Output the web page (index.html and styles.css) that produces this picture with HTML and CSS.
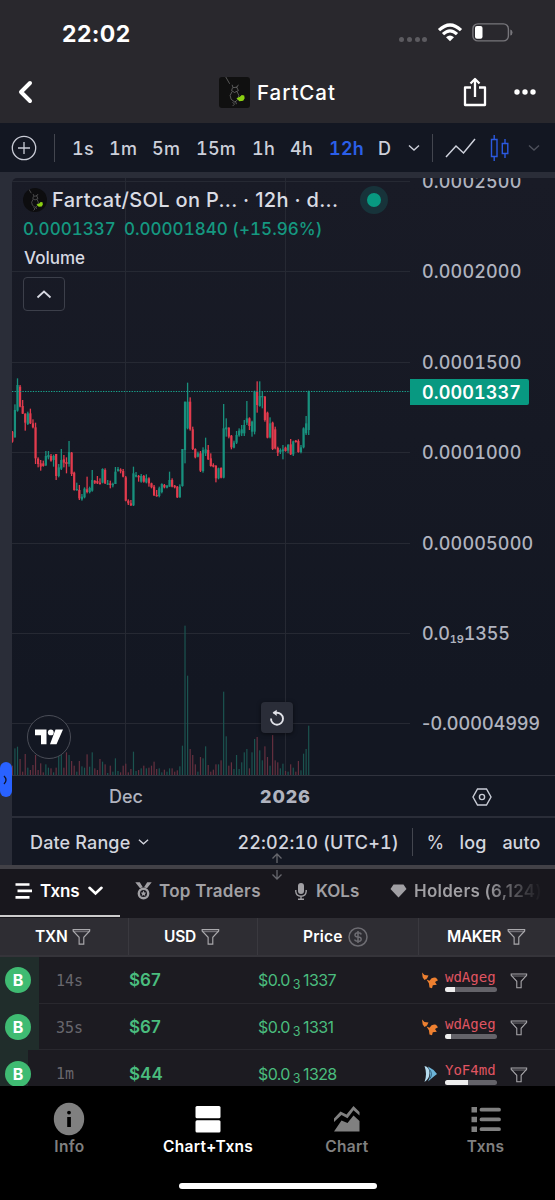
FILE: index.html
```html
<!DOCTYPE html>
<html lang="en">
<head>
<meta charset="utf-8">
<title>FartCat</title>
<link rel="stylesheet" href="styles.css">
</head>
<body>
<svg width="0" height="0" class="defs">
  <symbol id="funnel" viewBox="0 0 20 18"><path d="M1.2 1.2h17.4v1.5L12.4 9.300v7.200H7.500V9.300L1.200 2.700z" fill="none" stroke="currentColor" stroke-width="1.200"/><path d="M1.500 3.400h17" stroke="currentColor" stroke-width=".7"/></symbol>
  <symbol id="chev" viewBox="0 0 12 8"><path d="M1 1.500l5 4.500 5-4.500" fill="none" stroke="currentColor" stroke-width="1.400"/></symbol>
  <symbol id="cat" viewBox="0 0 32 32"><path d="M7 0l4 7M13.500 8l1 3 4-.5 1.500-2.500M14 11l-1 3 3 2 4-2-2-4M13.500 15l-2 4 1 4 4 3 3-3 1-4-2-4M14 26l2 2-2 2M17 25l1 3" fill="none" stroke="#7c7c7c" stroke-width=".7"/><path d="M18 22l3.500-1.500 2-2 2.500.5.500 3-1.500 2.500-4 .5z" fill="#8bd012"/></symbol>
  <symbol id="fox" viewBox="0 0 18 18"><path d="M1 1.500l2.500 2.500 4 .5-1.500 3-2.500 1.500-1.800-2.500z"/><path d="M5.500 8.500l3 1.200Q11 5.500 15 6.800l2 2.400-3 1.800 1.800 2.800-4 .4-.8 3-2.500-.6-.6-4.400z"/></symbol>
</svg>

<header class="header">
  <div class="status">
    <span class="clock">22:02</span>
    <span class="dots"><i></i><i></i><i></i><i></i></span>
    <svg class="wifi" width="26" height="19" viewBox="0 0 26 19"><g fill="none" stroke="#fff" stroke-width="3.200"><path d="M2 7.200Q13-3.200 24 7.200"/><path d="M6 11.200Q13 4.600 20 11.200"/></g><path d="M9 14.200Q13 10.600 17 14.200L13 18.300z" fill="#fff"/></svg>
    <svg width="41" height="19" viewBox="0 0 41 19"><rect x=".9" y=".9" width="35.500" height="17" rx="5" fill="none" stroke="#77767b" stroke-width="1.400"/><rect x="3" y="3" width="7.500" height="12.800" rx="2" fill="#fff"/><path d="M38.300 6.500q2.200.5 2.200 3t-2.200 3z" fill="#77767b"/></svg>
  </div>
  <div class="titlebar">
    <svg class="back" width="16" height="24" viewBox="0 0 16 24"><path d="M13 3L4 12l9 9" fill="none" stroke="#fff" stroke-width="4" stroke-linecap="round" stroke-linejoin="round"/></svg>
    <svg class="avatar" width="31" height="31"><use href="#cat"/></svg>
    <h1>FartCat</h1>
    <svg class="share" width="24" height="30" viewBox="0 0 24 30"><path d="M8 10.500H2V28h20V10.500h-6M12 20V3M7.500 6.500L12 2l4.500 4.500" fill="none" stroke="#fff" stroke-width="2.300" stroke-linejoin="round"/></svg>
    <svg class="more" width="22" height="6" viewBox="0 0 22 6"><g fill="#fff"><circle cx="3" cy="3" r="2.700"/><circle cx="11" cy="3" r="2.700"/><circle cx="19" cy="3" r="2.700"/></g></svg>
  </div>
</header>

<nav class="intervals">
  <svg class="plus" width="26" height="26" viewBox="0 0 26 26"><g fill="none" stroke="#c9ccd6" stroke-width="1.300"><circle cx="13" cy="13" r="11.700"/><path d="M13 7v12M7 13h12"/></g></svg>
  <i class="sep"></i>
  <span class="i1">1s</span><span class="i2">1m</span><span class="i3">5m</span><span class="i4">15m</span><span class="i5">1h</span><span class="i6">4h</span><span class="i7 on">12h</span><span class="i8">D</span>
  <svg class="ivchev" width="12" height="8"><use href="#chev"/></svg>
  <i class="sep sep2"></i>
  <svg class="line" width="31" height="22" viewBox="0 0 31 22"><path d="M1 20L11 9l7.500 7L30 2" fill="none" stroke="#cfd2dc" stroke-width="1.500"/></svg>
  <svg class="candles" width="20" height="28" viewBox="0 0 20 28"><path d="M1.500 5.500h5.500v17H1.500zM4.200 1v4.500M4.200 22.500V27M12.300 9.500h5.500v10h-5.500zM15 5v4.500M15 19.500V24" fill="none" stroke="#2b59e0" stroke-width="1.400"/></svg>
  <svg class="dim" width="12" height="8"><use href="#chev"/></svg>
</nav>

<main class="frame">
  <section class="panel">
    <div class="plot">
      <svg class="canvas" id="canvas" width="398" height="598"></svg>
      <div class="axis">
        <span>0.0002500</span><span>0.0002000</span><span>0.0001500</span><span>0.0001000</span><span>0.00005000</span><span class="tiny">0.0<sub>19</sub>1355</span><span class="neg">-0.00004999</span>
      </div>
      <b class="last">0.0001337</b>
      <div class="legend">
        <div class="pair"><svg width="24" height="24" viewBox="0 0 32 32"><use href="#cat"/></svg><span>Fartcat/SOL on P... · 12h · d...</span><i></i></div>
        <div class="vals"><span>0.0001337</span><span>0.00001840 (+15.96%)</span></div>
        <div class="vol">Volume</div>
        <div class="fold"><svg width="16" height="10" viewBox="0 0 16 10"><path d="M1.500 8.500L8 2.500l6.500 6" fill="none" stroke="#d7d9e2" stroke-width="1.800"/></svg></div>
      </div>
      <div class="tv"><svg width="29" height="16" viewBox="0 0 29 16"><path d="M0 .5h11.500v14.700H6V6.300H0zM20.500.5H28l-6.500 14.700H15z" fill="#fff"/><circle cx="15.800" cy="3.400" r="2.900" fill="#fff"/></svg></div>
      <div class="reset"><svg width="18" height="18" viewBox="0 0 18 18"><path d="M3 9.500a6 6 0 1 0 5.500-5.700H5.500" fill="none" stroke="#e2e3e9" stroke-width="1.900"/><path d="M8.700.7v6.200L4.600 3.800z" fill="#e2e3e9"/></svg></div>
    </div>
    <div class="timeaxis"><span class="dec">Dec</span><b>2026</b><svg width="20" height="18" viewBox="0 0 20 18"><path d="M5.500 1h9L19 9l-4.500 8h-9L1 9z" fill="none" stroke="#c9ccd6" stroke-width="1.400"/><circle cx="10" cy="9" r="2.600" fill="none" stroke="#c9ccd6" stroke-width="1.400"/></svg></div>
    <div class="range"><span class="dr">Date Range</span><svg width="11" height="8" viewBox="0 0 12 8"><use href="#chev"/></svg><span class="utc">22:02:10 (UTC+1)</span><i></i><span class="pct">%</span><span class="log">log</span><span class="auto">auto</span></div>
  </section>
  <div class="handle"><svg width="6" height="10" viewBox="0 0 6 10"><path d="M1 1q4 4 0 8" fill="none" stroke="#10142a" stroke-width="1.300"/></svg></div>
</main>

<div class="split"><svg width="12" height="28" viewBox="0 0 12 28"><path d="M6 1v9M1.500 5.500L6 1l4.500 4.500M6 17v9M1.500 21.500L6 26l4.500-4.500" fill="none" stroke="#66676d" stroke-width="1.300"/></svg></div>

<nav class="tabs">
  <div class="tab t1"><svg width="18" height="16" viewBox="0 0 18 16"><path d="M.5 1.500h14M2.500 7.900h14.500M.5 14.300h14" stroke="#fff" stroke-width="2.700"/></svg><span>Txns</span><svg class="open" width="15" height="10" viewBox="0 0 15 10"><path d="M1.500 1.800l6 5.700 6-5.700" fill="none" stroke="#fff" stroke-width="2.600" stroke-linecap="round"/></svg></div>
  <div class="tab t2"><svg width="17" height="18" viewBox="0 0 17 18"><path d="M.3.300h4.500l3 5-2.800 1zM16.700.300h-4.500L9 5.300l3 1z" fill="currentColor"/><circle cx="8.500" cy="11.500" r="4.700" fill="none" stroke="currentColor" stroke-width="2.400"/><path d="M8.500 8.500l.9 2 2 .2-1.500 1.400.4 2-1.800-1-1.800 1 .4-2-1.500-1.400 2-.2z" fill="currentColor"/></svg><span>Top Traders</span></div>
  <div class="tab t3"><svg width="12" height="17" viewBox="0 0 12 17"><rect x="3" y="0" width="6" height="11" rx="3" fill="currentColor"/><path d="M.8 7v1.500q.4 4.500 5.200 4.700 4.800-.2 5.200-4.700V7M6 13v3M3 16.200h6" fill="none" stroke="currentColor" stroke-width="1.400"/></svg><span>KOLs</span></div>
  <div class="tab t4"><svg width="17" height="14" viewBox="0 0 17 14"><path d="M3.500.5h10L16.500 5l-8 8.500L.5 5z" fill="currentColor"/></svg><span>Holders (6,124)</span></div>
</nav>

<section class="table">
  <div class="thead">
    <div class="c1">TXN<svg width="19" height="18"><use href="#funnel"/></svg></div>
    <div class="c2">USD<svg width="19" height="18"><use href="#funnel"/></svg></div>
    <div class="c3">Price<svg width="20" height="20" viewBox="0 0 20 20"><circle cx="10" cy="10" r="9" fill="none" stroke="#6d6c72" stroke-width="1.500"/><path d="M13.200 7.500Q12.800 5.800 10 5.800T7 7.900 10 10t3.200 2.200T10 14.300 6.800 12.500M10 4v12" fill="none" stroke="#6d6c72" stroke-width="1.500"/></svg></div>
    <div class="c4">MAKER<svg width="19" height="18"><use href="#funnel"/></svg></div>
  </div>
  <div class="row"><div class="side"><b>B</b></div><span class="age">14s</span><span class="usd">$67</span><span class="price">$0.0<sub>3</sub>1337</span><svg class="ico" width="18" height="18"><use href="#fox"/></svg><div class="maker">wdAgeg<i><u class="p20"></u></i></div><svg class="f" width="18" height="16" viewBox="0 0 20 18"><use href="#funnel"/></svg></div>
  <div class="row"><div class="side"><b>B</b></div><span class="age">35s</span><span class="usd">$67</span><span class="price">$0.0<sub>3</sub>1331</span><svg class="ico" width="18" height="18"><use href="#fox"/></svg><div class="maker">wdAgeg<i><u class="p12"></u></i></div><svg class="f" width="18" height="16" viewBox="0 0 20 18"><use href="#funnel"/></svg></div>
  <div class="row"><div class="side short"><b>B</b></div><span class="age">1m</span><span class="usd">$44</span><span class="price">$0.0<sub>3</sub>1328</span><svg class="ico" width="18" height="18" viewBox="0 0 18 18"><path d="M3.500 1q5 1 5 7t-5 9q3-8 0-16z" fill="#b5dcef"/><path d="M7 1.500q5.500 2.500 9 7.500-4 3-9 7.500 4-6.500 0-15z" fill="#6db4d8"/><path d="M8.500 4.500q3.500 4 .5 9" fill="none" stroke="#24506e" stroke-width=".9"/></svg><div class="maker">YoF4md<i><u class="p45"></u></i></div><svg class="f" width="18" height="16" viewBox="0 0 20 18"><use href="#funnel"/></svg></div>
</section>

<footer class="bottom">
  <div class="items">
    <div><svg width="32" height="34" viewBox="0 0 32 34"><ellipse cx="16" cy="17" rx="15.200" ry="16.200" fill="#808080"/><circle cx="16" cy="10.600" r="1.900" fill="#000"/><path d="M14.200 15h3.700v10h-3.700z" fill="#000"/></svg><span>Info</span></div>
    <div class="on"><svg width="32" height="34" viewBox="0 0 32 34"><rect x="3.500" y="4" width="25" height="12.300" rx="1.500" fill="#fff"/><rect x="3.500" y="18.300" width="25" height="12.300" rx="1.500" fill="#fff"/></svg><span>Chart+Txns</span></div>
    <div><svg width="32" height="34" viewBox="0 0 32 34"><path d="M3 16.500l6.500-7 6 3L22.500 4l6 6v3.500l-6-5.300-6 8-6-3.200-7.500 7zM3 29.500l7.500-11 6 2.500 6-7.500 6 5.500v10.500z" fill="#808080"/></svg><span>Chart</span></div>
    <div><svg width="32" height="34" viewBox="0 0 32 34"><path d="M1.500 5h5.500v5.500H1.500zM1.500 14.700h5.500v5.500H1.500zM1.500 24.400h5.500v5.500H1.500z" fill="#808080"/><path d="M11.500 7.700H29M11.500 17.400H29M11.500 27.200H29" stroke="#808080" stroke-width="3.800" stroke-linecap="round"/></svg><span>Txns</span></div>
  </div>
  <div class="home"></div>
</footer>
<script src="chart.js"></script>
</body>
</html>
```
FILE: styles.css
```css
* { box-sizing: border-box; }
body { margin: 0; width: 555px; height: 1200px; overflow: hidden; background: #000; font-family: Inter, "Liberation Sans", sans-serif; color: #d3d5de; }
svg { display: block; flex: none; }
span, b { white-space: nowrap; }
.defs { position: absolute; }

.header { height: 123px; background: #29282d; }
.status { height: 65px; display: flex; align-items: center; padding-left: 62px; color: #fff; }
.clock { font-size: 23px; font-weight: 700; letter-spacing: .4px; width: 337px; padding-top: 2px; }
.dots { display: flex; gap: 2.800px; padding-top: 13px; width: 38px; }
.dots i { width: 5px; height: 5px; border-radius: 50%; background: #5c5b60; }
.wifi { margin-right: 9px; }
.titlebar { height: 54px; display: flex; align-items: center; }
.back { margin-left: 17px; }
.avatar { margin-left: 186px; background: #101010; border-radius: 3px; }
.titlebar h1 { margin: 0 0 0 7px; width: 206px; font-size: 20.500px; font-weight: 500; letter-spacing: .95px; color: #fff; }
.more { margin-left: 27px; }

.intervals { height: 49px; background: #131722; display: flex; align-items: center; font-size: 18px; font-weight: 500; padding: 1px 0 0 11px; color: #cdd0da; letter-spacing: .25px; font-variant-numeric: tabular-nums; }
.intervals span { flex: none; }
.sep { width: 1px; height: 28px; background: #43464f; flex: none; margin: 0 17px; }
.intervals .on { color: #2b5fe8; font-weight: 600; }
.i1 { width: 37px; } .i2 { width: 43px; } .i3 { width: 44px; } .i4 { width: 56px; }
.i5 { width: 38px; } .i6 { width: 39px; } .i7 { width: 49px; } .i8 { width: 30px; }
.sep2 { margin: 0 12px; }
.candles { margin: 0 18px 0 14px; }
.dim { color: #4d505b; }

.frame { height: 693px; background: #2a2d38; padding: 6px 0 0 12px; position: relative; }
.panel { height: 687px; border-radius: 5px 0 0 0; overflow: hidden; background: linear-gradient(#191b26, #131722 75%); }
.plot { height: 598px; position: relative; border-bottom: 1px solid #30333e; display: flex; }
.axis { padding: 0 0 0 12px; margin-top: -10px; font-size: 18px; font-weight: 500; color: #b0b3bf; letter-spacing: .15px; font-variant-numeric: tabular-nums; }
.axis span { display: block; height: 90.400px; line-height: 27px; }
.axis sub { font-size: 11px; font-weight: 600; vertical-align: -3px; line-height: 0; }
.axis .tiny { letter-spacing: -.15px; }
.axis .neg { letter-spacing: .1px; font-variant-numeric: normal; }
.last { position: absolute; left: 398px; top: 201px; width: 119px; height: 26px; line-height: 27px; background: #089981; color: #fff; border-radius: 0 2px 2px 0; padding-left: 12px; font-size: 18px; font-weight: 600; letter-spacing: .1px; font-variant-numeric: tabular-nums; }
.legend { position: absolute; left: 11px; top: 0; }
.pair { display: flex; align-items: center; height: 43px; font-size: 20px; font-weight: 500; color: #dadce4; }
.pair svg { background: #0d0d0f; border-radius: 50%; }
.pair span { margin-left: 5px; width: 308px; letter-spacing: .33px; }
.pair i { width: 28px; height: 28px; border-radius: 50%; background: #089981; border: 7px solid #17333a; }
.vals { display: flex; gap: 8px; font-size: 17px; line-height: 20px; margin-top: -2px; color: #159880; letter-spacing: .02px; font-weight: 500; font-variant-numeric: tabular-nums; }
.vol { font-size: 17px; line-height: 20px; margin: 9px 0 0 1px; color: #d7d9e2; font-weight: 500; }
.fold { margin: 9px 0 0; width: 42px; height: 34px; border: 1px solid #3c3f4a; border-radius: 4px; display: grid; place-items: center; }
.tv { position: absolute; left: 15px; top: 537px; width: 44px; height: 44px; border-radius: 50%; border: 1.500px solid #4a4d57; background: #131722; display: grid; place-items: center; }
.reset { position: absolute; left: 249px; top: 524px; width: 32px; height: 31px; border-radius: 4px; background: #2a2d38; box-shadow: 0 1px 4px #0008; display: grid; place-items: center; }
.timeaxis { height: 42px; padding-top: 1px; display: flex; align-items: center; border-bottom: 2px solid #2a2d38; font-size: 18px; color: #b0b3bf; font-weight: 500; }
.dec { margin-left: 97px; width: 151px; }
.timeaxis b { width: 212px; font-weight: 800; letter-spacing: .9px; }
.range { height: 47px; padding-top: 1px; display: flex; align-items: center; font-size: 18px; font-weight: 500; padding-left: 18px; }
.dr { letter-spacing: .15px; }
.range svg { margin-left: 8px; }
.utc { margin-left: 88px; width: 175px; letter-spacing: .12px; font-variant-numeric: tabular-nums; }
.range i { width: 1px; height: 28px; background: #43464f; }
.pct { margin-left: 13px; width: 33px; font-weight: 400; }
.log { width: 43px; letter-spacing: .2px; }
.handle { position: absolute; left: 0; top: 590px; width: 12px; height: 35px; border-radius: 6px; background: #2962ff; display: grid; place-items: center; }

.split { height: 4px; background: #424147; position: relative; }
.split svg { position: absolute; left: 271px; top: -12px; }
.tabs { height: 49px; background: #18171d; display: flex; overflow: hidden; color: #a1a0a4; font-size: 17px; font-weight: 600; }
.tab { height: 48px; display: flex; align-items: center; gap: 7px; flex: none; padding-bottom: 4px; }
.t1 { width: 120px; padding-left: 15px; border-bottom: 2px solid #ccc; color: #fff; padding-bottom: 2px; letter-spacing: -.1px; }
.open { margin-left: 1px; }
.t2 { margin-left: 15px; width: 160px; letter-spacing: .3px; }
.t3 { width: 95px; gap: 9px; }
.t4 { letter-spacing: .25px; }
.t4 span { background: linear-gradient(90deg, #a1a0a4 55%, #18171d); background-clip: text; color: transparent; }

.table { height: 168px; overflow: hidden; background: #1c1b21; }
.thead { height: 39px; background: #2e2d33; border-bottom: 2px solid #35343a; display: grid; grid-template-columns: 129px 129px 161px 136px; color: #fff; font-size: 15.500px; font-weight: 600; }
.thead div { display: flex; align-items: center; gap: 5px; border-right: 1px solid #3a393f; letter-spacing: -.25px; }
.thead svg { color: #aaa9ad; }
.c1 { padding-left: 35px; } .c2 { padding-left: 35px; } .thead .c3 { padding-left: 45px; letter-spacing: .2px; } .c4 { padding-left: 28px; border: 0 !important; }
.thead .c4 { letter-spacing: -.4px; }
.thead .c4 svg { margin-left: 1px; }
.row { height: 46.700px; display: grid; grid-template-columns: 39px 17px 73px 129px 163px 24px 64px 20px; align-items: center; border-bottom: 1px solid #29282e; }
.ico { fill: #ee8030; }
.side { height: 46.700px; background: #202d2b; display: flex; align-items: center; padding-left: 5px; grid-column: 1; }
.short { width: 28px; }
.side b { width: 26px; height: 26px; border-radius: 50%; background: #3fbb72; color: #fff; font-size: 16px; line-height: 26px; text-align: center; flex: none; }
.age { grid-column: 3; font: 15px "DejaVu Sans Mono", monospace; color: #68676d; padding-top: 1px; }
.usd { color: #4abd7e; font-size: 17px; font-weight: 600; }
.price { color: #4abd7e; font-size: 16px; letter-spacing: -.6px; }
.price sub { font-size: 12.500px; margin: 0 3px; vertical-align: -3px; line-height: 0; }
.maker { font: 14px/16px "DejaVu Sans Mono", monospace; color: #e05561; }
.maker i { display: block; width: 52px; height: 5px; margin-top: 2px; border-radius: 3px; background: #646369; overflow: hidden; }
.maker u { display: block; height: 5px; background: #eee; }
.p20 { width: 20%; } .p12 { width: 12%; } .p45 { width: 45%; }
.f { color: #aaa9ad; margin: 2px 0 0 1px; }

.bottom { height: 114px; background: #000; }
.items { display: grid; grid-template-columns: repeat(4, 1fr); height: 100px; padding-top: 16px; color: #808080; font-size: 15.500px; font-weight: 600; letter-spacing: .3px; }
.items div { display: flex; flex-direction: column; align-items: center; gap: 1px; line-height: 19px; }
.items .on { color: #fff; }
.home { width: 198px; height: 6px; border-radius: 3px; background: #fff; margin: -3px 0 0 179px; }
```
FILE: chart.js
```js
// Candle: colour, high, low, open/close top and bottom, volume; thirds of a pixel from the series origin.
const series = `r 183 218 185 215 28|g 103 203 120 202 80|g 25 125 45 122 85|r 45 112 50 110 48|r 90 132 108 131 10|r 130 182 131 158 63|g 125 165 130 162 22|r 116 162 130 160 15|r 148 175 160 172 30|r 158 282 172 265 60|r 262 292 266 282 15|r 270 302 280 290 35|r 272 290 280 288 8|g 243 288 258 286 32|g 243 268 255 262 22|r 252 275 258 272 20|g 254 290 258 270 8|r 252 330 252 318 22|g 282 322 292 318 58|g 237 300 270 296 60|r 255 292 268 278 22|r 262 310 276 282 68|g 213 290 246 282 60|r 246 318 248 312 42|r 305 362 308 360 28|g 338 362 357 361 10|r 345 390 360 385 42|g 372 392 380 388 26|g 352 385 356 382 22|r 320 370 358 366 62|g 350 370 354 366 25|g 300 365 330 362 68|r 330 342 333 338 20|r 318 342 333 340 15|r 325 344 338 342 48|g 295 340 297 338 40|r 295 342 300 340 32|g 330 345 340 342 6|r 332 355 340 345 28|g 338 352 342 346 10|g 291 342 305 342 50|g 291 305 297 303 12|r 295 310 299 304 8|r 297 322 303 320 28|r 318 394 322 392 34|r 388 405 392 400 8|r 390 408 400 406 18|g 290 408 310 406 70|g 306 322 315 320 12|r 315 335 318 322 15|g 312 338 318 335 20|r 315 338 318 335 28|g 313 340 325 337 20|r 322 350 325 340 22|r 338 355 340 352 28|r 345 378 350 376 40|r 360 380 375 378 18|g 350 382 355 378 20|g 340 370 342 366 8|r 342 355 345 352 16|g 345 355 347 353 10|g 305 350 330 350 20|r 325 352 330 350 20|r 345 355 347 352 10|r 348 384 350 382 14|g 343 383 350 382 26|g 237 350 237 348 88|g 95 280 95 240 448|g 38 178 95 175 298|r 82 182 95 178 78|r 170 240 178 237 60|r 235 265 237 262 32|g 245 262 250 260 10|r 243 306 250 302 54|g 232 308 240 303 50|g 203 258 238 250 86|r 225 270 240 268 30|r 250 290 265 288 10|r 280 292 285 290 16|r 285 337 288 325 32|g 293 328 295 325 32|r 292 325 294 323 44|g 102 325 175 323 250|g 145 200 172 178 116|r 172 205 173 200 28|r 195 238 197 232 38|g 212 235 218 233 18|g 183 222 195 218 60|g 175 200 182 196 18|g 165 198 178 190 38|g 150 198 165 190 68|g 93 165 145 158 78|r 142 180 145 168 20|g 152 200 155 185 68|g 62 193 65 185 108|r 34 128 65 105 114|g 34 110 78 108 74|g 65 115 78 82 44|r 78 155 80 150 86|r 125 205 128 203 54|g 142 205 160 202 28|r 155 240 158 237 120|r 170 238 178 235 44|r 230 258 234 248 38|g 235 252 240 246 20|g 225 268 238 244 34|r 230 245 233 243 12|g 222 250 225 242 10|r 207 255 223 253 32|g 212 258 214 253 22|r 210 218 212 216 10|r 208 248 213 246 42|g 225 250 232 246 14|g 172 235 175 232 64|g 138 195 160 190 78|g 62 195 64 180 148`;
const GREEN = '#18907d', RED = '#e23b4d', GREEN_VOL = '#1b5450', RED_VOL = '#65303f';
let out = '';
for (let y = 3.5; y < 590; y += 90.4) out += `<path d="M0 ${Math.round(y - .5) + .5}H398" stroke="#262933"/>`;
for (const x of [113, 273]) out += `<path d="M${x}.5 0V597" stroke="#262933"/>`;
series.split('|').forEach((s, i) => {
  const [c, ...n] = s.split(' ');
  const [hi, lo, top, bot, vol] = n.map(v => v / 3);
  const x = .35 + 2.577 * i, col = c === 'g' ? GREEN : RED;
  const rect = (w, y, h, f) => `<rect x="${x - w / 2}" y="${y}" width="${w}" height="${h}" fill="${f}"/>`;
  out += rect(1.2, 597 - vol, vol, c === 'g' ? GREEN_VOL : RED_VOL);
  out += rect(1.3, 192 + hi, lo - hi, col) + rect(2.2, 192 + top, Math.max(1.3, bot - top), col);
});
out += '<path d="M0 213.500H398" stroke="#18a58e" stroke-width="1.200" stroke-dasharray="1.300 1.300"/>';
document.getElementById('canvas').innerHTML = out;
```
